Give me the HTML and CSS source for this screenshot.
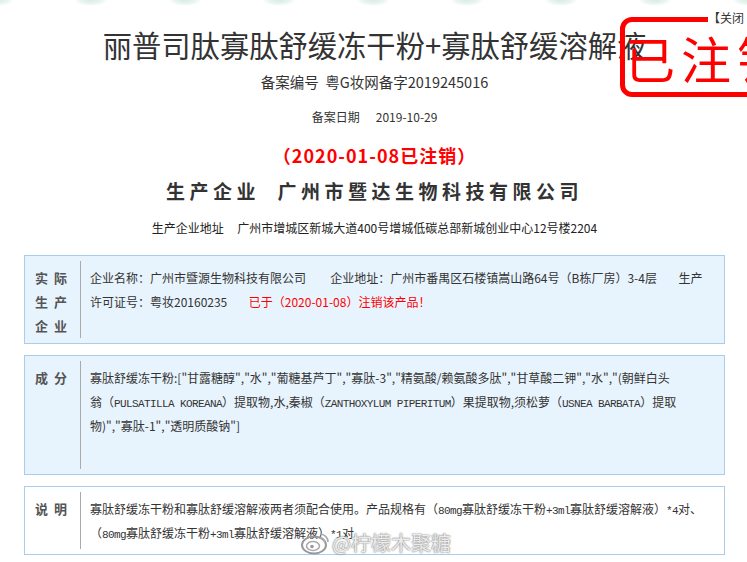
FILE: index.html
```html
<!DOCTYPE html>
<html lang="zh-CN">
<head>
    <meta charset="UTF-8">
    <meta name="viewport" content="width=device-width, initial-scale=1.0">
    <title>丽普司肽寡肽舒缓冻干粉+寡肽舒缓溶解液</title>
    <link rel="stylesheet" href="styles.css">
</head>
<body>
    <div class="page">
        <div class="deco"></div>
        <!-- 注销印章 盖在标题上 -->
        <div class="stamp">已注销</div>
        <a class="close" href="#">【关闭</a>

        <div class="head">
            <h1 class="title">丽普司肽寡肽舒缓冻干粉+寡肽舒缓溶解液</h1>
            <p class="reg">备案编号&nbsp;&nbsp;粤G妆网备字2019245016</p>
            <p class="date">备案日期&nbsp;&nbsp;&nbsp;&nbsp;&nbsp;&nbsp;2019-10-29</p>
            <p class="cancel">（2020-01-08已注销）</p>
            <p class="maker">生产企业&nbsp;&nbsp;广州市暨达生物科技有限公司</p>
            <p class="addr">生产企业地址&nbsp;&nbsp;&nbsp;&nbsp;&nbsp;广州市增城区新城大道400号增城低碳总部新城创业中心12号楼2204</p>
        </div>

        <div class="box company">
            <div class="label">实际<br>生产<br>企业</div>
            <div class="text">企业名称：广州市暨源生物科技有限公司&nbsp;&nbsp;&nbsp;&nbsp;&nbsp;&nbsp;&nbsp;&nbsp;&nbsp;企业地址：广州市番禺区石楼镇嵩山路64号（B栋厂房）3-4层&nbsp;&nbsp;&nbsp;&nbsp;&nbsp;&nbsp;&nbsp;&nbsp;生产许可证号：粤妆20160235&nbsp;&nbsp;&nbsp;&nbsp;&nbsp;&nbsp;&nbsp;&nbsp;<span class="red">已于（2020-01-08）注销该产品！</span></div>
        </div>

        <div class="box formula">
            <div class="label">成分</div>
            <div class="text">寡肽舒缓冻干粉:["甘露糖醇","水","葡糖基芦丁","寡肽-3","精氨酸/赖氨酸多肽","甘草酸二钾","水","(朝鲜白头<br>翁（<span class="en">PULSATILLA KOREANA</span>）提取物,水,秦椒（<span class="en">ZANTHOXYLUM PIPERITUM</span>）果提取物,须松萝（<span class="en">USNEA BARBATA</span>）提取<br>物)","寡肽-1","透明质酸钠"]</div>
        </div>

        <div class="box note">
            <div class="label">说明</div>
            <div class="text">寡肽舒缓冻干粉和寡肽舒缓溶解液两者须配合使用。产品规格有（<span class="en">80mg</span>寡肽舒缓冻干粉<span class="en">+3ml</span>寡肽舒缓溶解液）<span class="en">*4</span>对、（<span class="en">80mg</span>寡肽舒缓冻干粉<span class="en">+3ml</span>寡肽舒缓溶解液）<span class="en">*1</span>对</div>
        </div>

        <!-- 微博水印 -->
        <div class="mark">
            <svg width="30" height="24" viewBox="0 0 30 24">
                <ellipse cx="14" cy="14" rx="12" ry="8.5" fill="none" stroke="#999" stroke-width="2"/>
                <ellipse cx="13" cy="15" rx="6.5" ry="4.5" fill="none" stroke="#aaa" stroke-width="1.6"/>
                <circle cx="12" cy="15.5" r="1.8" fill="#999"/>
                <path d="M20 3 a8 8 0 0 1 8 8" fill="none" stroke="#aaa" stroke-width="1.6"/>
                <path d="M20 6.5 a4.5 4.5 0 0 1 4.5 4.5" fill="none" stroke="#aaa" stroke-width="1.4"/>
            </svg>
            <span>@柠檬木聚糖</span>
        </div>
    </div>
</body>
</html>
```

FILE: styles.css
```css
*{
    margin: 0;
    padding: 0;
    box-sizing: border-box;
}
body{
    background: #fff;
    font-family: "Noto Sans CJK SC", sans-serif;
    color: #333;
    font-size: 12px;
}
.page{
    position: relative;
    width: 747px;
    height: 562px;
    overflow: hidden;
    padding: 0 22px 0 24px;
}
/* 顶部花纹 */
.deco{
    position: absolute;
    top: 0;
    left: 0;
    right: 0;
    height: 9px;
    background: radial-gradient(ellipse 17px 6px at 47px 0, #d6ece2 0, #e9f5ef 60%, rgba(255,255,255,0) 100%) 44px 0 / 94px 9px repeat-x;
}
/* 印章 */
.stamp{
    position: absolute;
    top: 17px;
    left: 620px;
    width: 200px;
    padding: 10px 0 10px 0;
    border: 5px solid #f00;
    border-radius: 12px;
    color: #f00;
    font-size: 50px;
    line-height: 50px;
    letter-spacing: 6px;
    white-space: nowrap;
}
.close{
    position: absolute;
    top: 10px;
    left: 708px;
    padding-right: 10px;
    background: #fff;
    color: #333;
    font-size: 12px;
    line-height: 15px;
    text-decoration: none;
    white-space: nowrap;
}

/* 标题区 */
.head{
    text-align: center;
    padding-top: 24px;
}
.title{
    font-size: 29.3px;
    line-height: 40px;
    font-weight: normal;
    color: #333;
}
.reg{
    margin-top: 8px;
    font-size: 14.5px;
    line-height: 20px;
}
.date{
    margin-top: 15px;
    font-size: 12px;
    line-height: 20px;
}
.cancel{
    margin-top: 16px;
    font-size: 18px;
    line-height: 24px;
    font-weight: bold;
    letter-spacing: 1px;
    color: #f00;
}
.maker{
    margin-top: 11px;
    font-size: 19px;
    line-height: 26px;
    font-weight: bold;
    letter-spacing: 4.5px;
    color: #333;
}
.addr{
    margin-top: 14px;
    font-size: 12px;
    line-height: 20px;
    color: #222;
}

/* 信息块 */
.box{
    display: flex;
    margin-top: 11px;
    padding: 5px 0;
    background: #e8f4fd;
    border: 1px solid #a9cdea;
}
.box.company{
    margin-top: 17px;
}
.box.note{
    background: #fff;
}
.label{
    flex: none;
    width: 56px;
    padding: 5px 0 0 10px;
    border-right: 1px solid #aaa;
    font-size: 13px;
    line-height: 24px;
    font-weight: bold;
    letter-spacing: 6px;
    color: #555;
}
.text{
    flex: 1;
    padding: 5px 20px 0 9px;
    line-height: 24px;
    color: #333;
}
.formula .text{
    padding-bottom: 31px;
}
.note .text{
    padding-right: 10px;
    padding-bottom: 4px;
}
.en{
    font-family: "Liberation Mono", monospace;
    font-size: 11px;
    letter-spacing: -0.6px;
    line-height: 1;
}
.red{
    color: #f00;
}

/* 水印 */
.mark{
    position: absolute;
    left: 300px;
    top: 531px;
    display: flex;
    align-items: center;
    gap: 2px;
    font-size: 20px;
    line-height: 24px;
    color: rgba(255,255,255,.85);
    text-shadow: 0 0 2px #888, 0 0 1px #777;
}
```
